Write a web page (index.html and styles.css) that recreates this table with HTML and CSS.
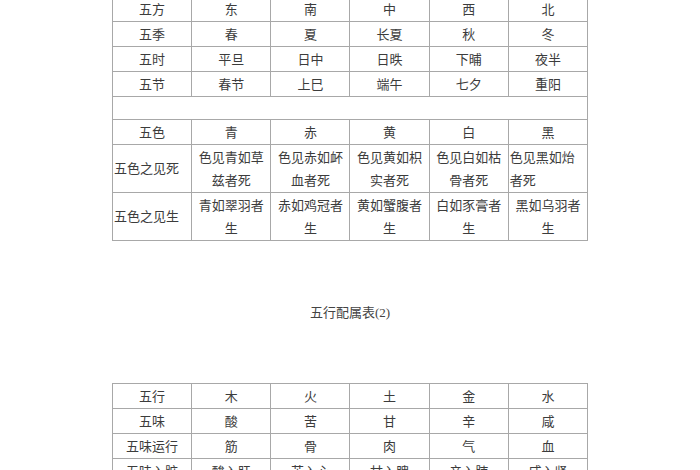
FILE: index.html
```html
<!DOCTYPE html>
<html lang="zh-CN">
<head>
<meta charset="utf-8">
<title>五行配属表</title>
<link rel="stylesheet" href="styles.css">
</head>
<body>
<main class="page">
  <table class="grid grid-top">
    <tr><td>五方</td><td>东</td><td>南</td><td>中</td><td>西</td><td>北</td></tr>
    <tr><td>五季</td><td>春</td><td>夏</td><td>长夏</td><td>秋</td><td>冬</td></tr>
    <tr><td>五时</td><td>平旦</td><td>日中</td><td>日昳</td><td>下晡</td><td>夜半</td></tr>
    <tr><td>五节</td><td>春节</td><td>上巳</td><td>端午</td><td>七夕</td><td>重阳</td></tr>
    <tr class="blank"><td colspan="6"></td></tr>
    <tr><td>五色</td><td>青</td><td>赤</td><td>黄</td><td>白</td><td>黑</td></tr>
    <tr class="tall">
      <td class="left">五色之见死</td>
      <td>色见青如草<br>兹者死</td>
      <td>色见赤如衃<br>血者死</td>
      <td>色见黄如枳<br>实者死</td>
      <td>色见白如枯<br>骨者死</td>
      <td class="left">色见黑如炲<br>者死</td>
    </tr>
    <tr class="tall">
      <td class="left">五色之见生</td>
      <td>青如翠羽者<br>生</td>
      <td>赤如鸡冠者<br>生</td>
      <td>黄如蟹腹者<br>生</td>
      <td>白如豕膏者<br>生</td>
      <td>黑如乌羽者<br>生</td>
    </tr>
  </table>

  <p class="caption">五行配属表(2)</p>

  <table class="grid">
    <tr><td>五行</td><td>木</td><td>火</td><td>土</td><td>金</td><td>水</td></tr>
    <tr><td>五味</td><td>酸</td><td>苦</td><td>甘</td><td>辛</td><td>咸</td></tr>
    <tr><td>五味运行</td><td>筋</td><td>骨</td><td>肉</td><td>气</td><td>血</td></tr>
    <tr><td>五味入脏</td><td>酸入肝</td><td>苦入心</td><td>甘入脾</td><td>辛入肺</td><td>咸入肾</td></tr>
  </table>
</main>
</body>
</html>
```

FILE: styles.css
```css
html, body {
  margin: 0;
  padding: 0;
  background: #ffffff;
}

.page {
  width: 700px;
  height: 470px;
  overflow: hidden;
  font-family: "Liberation Serif", "Noto Sans CJK SC", serif;
  font-size: 13px;
  color: #3c3c3c;
}

.grid {
  border-collapse: collapse;
  margin: 0 auto;
  width: 476px;
  table-layout: fixed;
}

.grid-top {
  margin-top: -4px;
}

.grid td {
  border: 1px solid #a8a8a8;
  height: 24px;
  padding: 0 1px;
  text-align: center;
  vertical-align: middle;
  line-height: 23px;
  white-space: nowrap;
}

.grid .blank td {
  height: 22px;
}

.grid .tall td {
  height: 47px;
}

.grid td.left {
  text-align: left;
}

.caption {
  margin: 60px 0 58px;
  line-height: 24px;
  text-align: center;
  font-size: 13px;
  color: #444;
}
```
